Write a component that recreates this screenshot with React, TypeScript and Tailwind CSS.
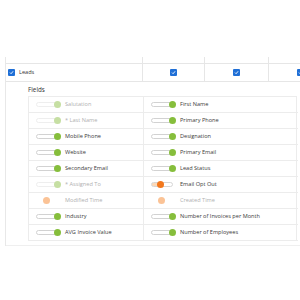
import React from "react";

type Kind = "on" | "onDis" | "offOrange" | "offDis";

const left: [string, Kind][] = [
  ["Salutation", "onDis"],
  ["* Last Name", "onDis"],
  ["Mobile Phone", "on"],
  ["Website", "on"],
  ["Secondary Email", "on"],
  ["* Assigned To", "onDis"],
  ["Modified Time", "offDis"],
  ["Industry", "on"],
  ["AVG Invoice Value", "on"],
];
const right: [string, Kind][] = [
  ["First Name", "on"],
  ["Primary Phone", "on"],
  ["Designation", "on"],
  ["Primary Email", "on"],
  ["Lead Status", "on"],
  ["Email Opt Out", "offOrange"],
  ["Created Time", "offDis"],
  ["Number of Invoices per Month", "on"],
  ["Number of Employees", "on"],
];

function Toggle({ kind }: { kind: Kind }) {
  return (
    <div className="relative ml-[7px] h-[7px] w-[25px] shrink-0">
      {kind === "on" && (
        <div className="absolute left-0 top-[1px] h-[5px] w-[22px] rounded-full border border-[#d2d2d2] bg-white" />
      )}
      {kind === "onDis" && (
        <div className="absolute left-0 top-[1px] h-[5px] w-[22px] rounded-full border border-[#eeeeee] bg-white" />
      )}
      {kind === "offOrange" && (
        <div className="absolute left-0 top-[1px] h-[5px] w-[22px] rounded-full border border-[#d6d6d6] bg-[linear-gradient(to_right,#fcd9b8_0,#fcd9b8_45%,#ffffff_45%)]" />
      )}
      {kind === "on" && (
        <div className="absolute left-[18px] top-0 h-[7px] w-[7px] rounded-full bg-[#86be3c]" />
      )}
      {kind === "onDis" && (
        <div className="absolute left-[18px] top-0 h-[7px] w-[7px] rounded-full bg-[#c6dfa3]" />
      )}
      {kind === "offOrange" && (
        <div className="absolute left-[6px] top-0 h-[7px] w-[7px] rounded-full bg-[#f2781e]" />
      )}
      {kind === "offDis" && (
        <div className="absolute left-[7px] top-0 h-[7px] w-[7px] rounded-full bg-[#fbc396]" />
      )}
    </div>
  );
}

function Cell({ label, kind, first }: { label: string; kind: Kind; first?: boolean }) {
  const dis = kind === "onDis" || kind === "offDis";
  return (
    <div
      className={
        "flex h-[16px] items-center border-b border-[#ececec] " +
        (first ? "border-r border-[#ececec]" : "")
      }
    >
      <Toggle kind={kind} />
      <span
        className={
          "ml-[4px] whitespace-nowrap text-[5.6px] leading-none " +
          (dis ? "text-[#b0b0b0]" : "text-[#3a3a3a]")
        }
      >
        {label}
      </span>
    </div>
  );
}

function Check() {
  return (
    <div className="flex h-[7px] w-[7px] items-center justify-center rounded-[1px] bg-[#1f6fd6]">
      <svg width="5" height="5" viewBox="0 0 10 10">
        <path d="M2 5.2 L4.2 7.4 L8.2 2.6" stroke="white" strokeWidth="1.8" fill="none" />
      </svg>
    </div>
  );
}

export default function App() {
  return (
    <div className="h-[300px] w-[300px] overflow-hidden bg-white font-['Open_Sans',sans-serif]">
      <div className="pt-[57px]">
        <div className="ml-[5px] w-[330px] border-l border-[#e8e8e8]">
          <div className="flex h-[7px] border-b border-[#e6e6e6]">
            <div className="w-[137px] border-r border-[#e6e6e6]" />
            <div className="w-[62px] border-r border-[#e6e6e6]" />
            <div className="w-[64px] border-r border-[#e6e6e6]" />
            <div className="flex-1" />
          </div>
          <div className="flex h-[18px] border-b border-[#e6e6e6]">
            <div className="flex w-[137px] items-center border-r border-[#e6e6e6] pl-[2px]">
              <Check />
              <span className="ml-[4px] text-[5.6px] leading-none text-[#333]">Leads</span>
            </div>
            <div className="flex w-[62px] items-center justify-center border-r border-[#e6e6e6]">
              <Check />
            </div>
            <div className="flex w-[64px] items-center justify-center border-r border-[#e6e6e6]">
              <Check />
            </div>
            <div className="flex w-[62px] items-center justify-center">
              <Check />
            </div>
          </div>
          <div className="border-b border-[#efefef] pb-[4px] pl-[22px]">
            <div className="flex h-[14px] items-center pt-[3px] text-[6.3px] leading-none text-[#333]">
              Fields
            </div>
            <div className="grid w-[269px] grid-cols-[115px_154px] border-l border-r border-t border-[#ececec]">
              {left.map((l, i) => (
                <React.Fragment key={i}>
                  <Cell label={l[0]} kind={l[1]} first />
                  <Cell label={right[i][0]} kind={right[i][1]} />
                </React.Fragment>
              ))}
            </div>
          </div>
        </div>
      </div>
    </div>
  );
}
